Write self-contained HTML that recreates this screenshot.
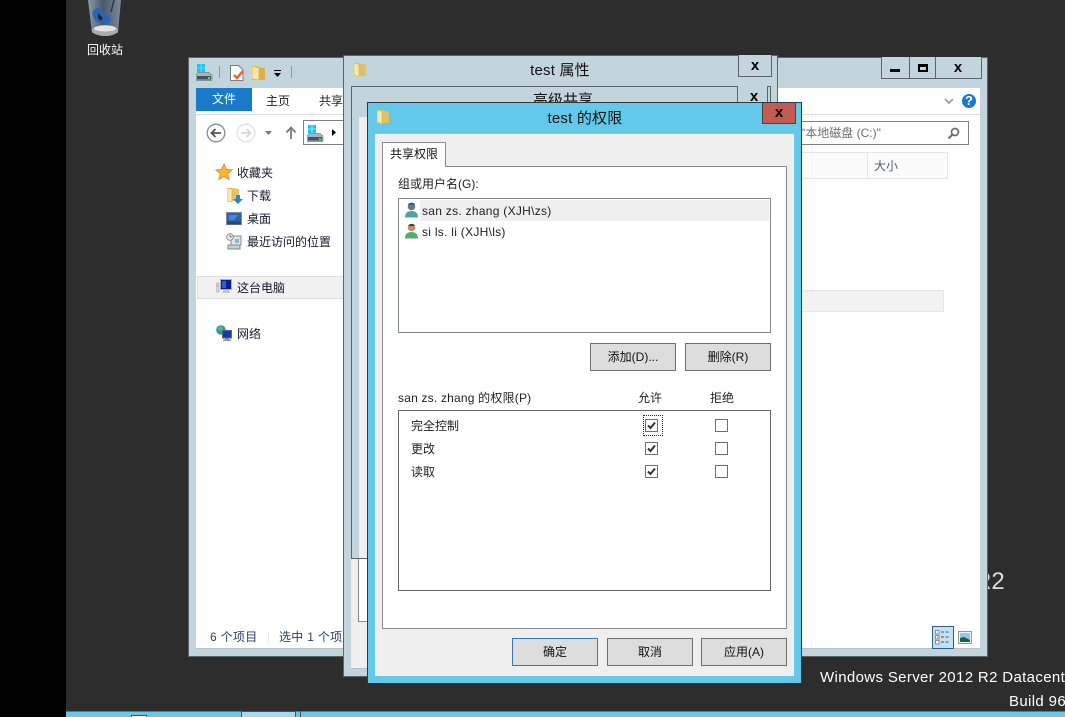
<!DOCTYPE html>
<html lang="zh"><head><meta charset="utf-8"><title>test 的权限</title>
<style>
html,body{margin:0;padding:0;width:1065px;height:717px;overflow:hidden;background:#2d2d2d}
body{position:relative;font:12px/16px "Liberation Sans","Noto Sans CJK SC",sans-serif;color:#000}
.b,.t,svg{position:absolute;box-sizing:border-box}
.t{white-space:nowrap}
.x{background:#c2d5dc;border:1px solid #5f6468}
.btn{position:absolute;box-sizing:border-box;background:#dddddd;border:1px solid #707070;text-align:center;line-height:26px;color:#111}
.xb{font:bold 15px/18px "Liberation Sans",sans-serif;text-align:center}
.ck{position:absolute;box-sizing:border-box;width:13px;height:13px;background:#fff;border:1px solid #707070}
</style></head><body>
<div class="b" style="left:0;top:0;width:66px;height:717px;background:#000"></div>

<!-- recycle bin -->
<svg style="left:85px;top:0" width="40" height="38" viewBox="0 0 40 38">
<defs><linearGradient id="g1" x1="0" x2="1" y1="0" y2="0"><stop offset="0" stop-color="#8a9aa8"/><stop offset=".45" stop-color="#4a5a6b"/><stop offset="1" stop-color="#7a8b9a"/></linearGradient></defs>
<path d="M3 0h33l-3 33H7z" fill="url(#g1)"/>
<path d="M8 11c3-4 7-4 9-1 2 2 2 4 5 5 3 1 5 4 3 7-2 2-5 2-8 1-3-2-5 0-7-3-2-3-3-6-2-9z" fill="#2f62b5"/>
<path d="M13 13l5 5-2 3-3-3z" fill="#1c2a38"/>
<path d="M29 0l-3 12" stroke="#2a3644" stroke-width="1.500"/>
<ellipse cx="20" cy="30.500" rx="13" ry="5.500" fill="#a8acaf"/><ellipse cx="20" cy="28.500" rx="11" ry="3" fill="#e3e4e4"/>
</svg>
<div class="t" style="left:87px;top:42px;color:#fff">回收站</div>

<!-- Desktop watermark -->
<div class="t" style="left:974px;top:568px;color:#dcdcdc;font-size:24px;line-height:28px">R2</div>
<div class="t" style="left:820px;top:669px;color:#fff;font-size:15px;line-height:18px;letter-spacing:.35px">Windows Server 2012 R2 Datacenter</div>
<div class="t" style="left:1009px;top:693px;color:#fff;font-size:15px;line-height:18px;letter-spacing:.35px">Build 9600</div>

<!-- taskbar -->
<div class="b" style="left:66px;top:711px;width:999px;height:6px;background:#63c8ea;border-top:1px solid #4d7f90"></div>
<div class="b" style="left:241px;top:711px;width:55px;height:6px;background:#9edcf2;border:1px solid #3f5a66;border-bottom:0"></div>
<div class="b" style="left:300px;top:711px;width:1px;height:6px;background:#3f5a66"></div>
<div class="b" style="left:131px;top:715px;width:16px;height:2px;background:#fff;border:1px solid #1a5fa8;border-bottom:0"></div>

<!-- explorer -->
<div class="b x" style="left:188px;top:57px;width:800px;height:600px"></div>
<div class="b" style="left:196px;top:88px;width:784px;height:561px;background:#fff;border-bottom:1px solid #b4bfc6"></div>
<div class="b" style="left:196px;top:114px;width:784px;height:1px;background:#dadbdc"></div>
<div class="b" style="left:196px;top:88px;width:56px;height:23px;background:#1979ca"></div>
<div class="t" style="left:212px;top:91px;color:#fff">文件</div>
<div class="t" style="left:266px;top:93px;color:#222">主页</div>
<div class="t" style="left:319px;top:93px;color:#222">共享</div>

<!-- QAT -->
<svg style="left:196px;top:63px" width="17" height="18" viewBox="0 0 17 18"><path d="M1 1h3.700v3.700H1zM5.300 1H9v3.700H5.300zM1 5.300h3.700V9H1zM5.300 5.300H9V9H5.300z" fill="#10c8fb"/><path d="M0 12l2-2.500h11l3 2.500v5.500H0z" fill="#a9b4ba" stroke="#77838b" stroke-width=".7"/><rect x="1" y="13" width="14" height="3.500" fill="#3f5563"/><rect x="12" y="14" width="2" height="2" fill="#5fd15f"/></svg>
<div class="b" style="left:219px;top:66px;width:1px;height:12px;background:#8a9aa1"></div>
<svg style="left:230px;top:65px" width="14" height="16" viewBox="0 0 14 16"><path d="M.5.500h8l4.500 4.500v10.500H.5z" fill="#fbfbfb" stroke="#7f7f7f"/><path d="M4 10l3 3 6-7" fill="none" stroke="#e2683e" stroke-width="2.500"/></svg>
<svg style="left:252px;top:65px" width="14" height="16" viewBox="0 0 14 16"><path d="M0 1h5l8 2v12H0z" fill="#e9c767"/><path d="M0 1l7 2v12l-7-1z" fill="#f8e7a4" stroke="#c9a443" stroke-width=".6"/><path d="M7 3h6v12H7z" fill="#dcb04c"/></svg>
<svg style="left:273px;top:70px" width="9" height="8" viewBox="0 0 9 8"><path d="M1 0h7v1H1z" fill="#000"/><path d="M1 3h7L4.500 7z" fill="#000"/></svg>
<div class="b" style="left:291px;top:66px;width:1px;height:12px;background:#8a9aa1"></div>

<!-- explorer window buttons -->
<div class="b" style="left:881px;top:57px;width:101px;height:22px;background:#c2d5dc;border:1px solid #5f6468;border-top:0"></div>
<div class="b" style="left:909px;top:57px;width:1px;height:22px;background:#5f6468"></div>
<div class="b" style="left:935px;top:57px;width:1px;height:22px;background:#5f6468"></div>
<div class="b" style="left:890px;top:69px;width:10px;height:3px;background:#000"></div>
<div class="b" style="left:918px;top:64px;width:10px;height:8px;border:2px solid #000;border-top-width:3px"></div>
<div class="t xb" style="left:948px;top:59px;width:20px">x</div>

<!-- ribbon right -->
<svg style="left:943px;top:97px" width="12" height="9" viewBox="0 0 12 9"><path d="M2 2l4 4 4-4" fill="none" stroke="#a0a0a0" stroke-width="1.800"/></svg>
<div class="b" style="left:962px;top:94px;width:14px;height:14px;border-radius:50%;background:#1979ca;color:#fff;font:bold 13px/14px 'Liberation Sans',sans-serif;text-align:center">?</div>

<!-- nav -->
<svg style="left:206px;top:123px" width="20" height="20" viewBox="0 0 20 20"><circle cx="10" cy="10" r="8.800" fill="#fff" stroke="#8a8a8a" stroke-width="1.300"/><path d="M15 10H6M9.500 6l-4 4 4 4" fill="none" stroke="#555" stroke-width="1.800"/></svg>
<svg style="left:236px;top:123px" width="20" height="20" viewBox="0 0 20 20"><circle cx="10" cy="10" r="8.800" fill="#fff" stroke="#e2e2e2" stroke-width="1.300"/><path d="M5 10h9M10.500 6l4 4-4 4" fill="none" stroke="#d8d8d8" stroke-width="1.800"/></svg>
<svg style="left:264px;top:130px" width="9" height="6" viewBox="0 0 9 6"><path d="M1 1h7L4.500 5z" fill="#777"/></svg>
<svg style="left:285px;top:126px" width="12" height="14" viewBox="0 0 12 14"><path d="M6 13V2M1.500 6.500L6 1.500l4.500 5" fill="none" stroke="#7a7a7a" stroke-width="1.800"/></svg>
<div class="b" style="left:303px;top:120px;width:60px;height:25px;border:1px solid #808080;background:#fff"></div>
<svg style="left:307px;top:124px" width="17" height="18" viewBox="0 0 17 18"><path d="M1 1h3.700v3.700H1zM5.300 1H9v3.700H5.300zM1 5.300h3.700V9H1zM5.300 5.300H9V9H5.300z" fill="#10c8fb"/><path d="M0 12l2-2.500h11l3 2.500v5.500H0z" fill="#a9b4ba" stroke="#77838b" stroke-width=".7"/><rect x="1" y="13" width="14" height="3.500" fill="#3f5563"/><rect x="12" y="14" width="2" height="2" fill="#5fd15f"/></svg>
<svg style="left:332px;top:128px" width="5" height="9" viewBox="0 0 5 9"><path d="M0 1l4 3.500L0 8z" fill="#000"/></svg>

<!-- search -->
<div class="b" style="left:780px;top:121px;width:189px;height:24px;border:1px solid #808080;border-left:0;background:#fff"></div>
<div class="t" style="left:801px;top:125px;color:#6d6d6d">"本地磁盘 (C:)"</div>
<svg style="left:947px;top:127px" width="13" height="13" viewBox="0 0 13 13"><circle cx="8" cy="5" r="3.500" fill="none" stroke="#6e6e6e" stroke-width="1.700"/><path d="M5.500 7.500L1.500 11.500" stroke="#6e6e6e" stroke-width="2.200"/></svg>

<!-- header -->
<div class="b" style="left:778px;top:152px;width:170px;height:27px;background:#fbfbfb;border:1px solid #e5e5e5;border-left:0"></div>
<div class="b" style="left:867px;top:152px;width:1px;height:27px;background:#e5e5e5"></div>
<div class="t" style="left:874px;top:158px;color:#4c607a">大小</div>
<div class="b" style="left:778px;top:290px;width:166px;height:22px;background:#f2f2f2;border:1px solid #e6e6e6;border-left:0"></div>

<!-- nav pane -->
<svg style="left:215px;top:163px" width="18" height="18" viewBox="0 0 18 18"><path d="M9 1l2.400 5.300 5.800.6-4.300 3.900 1.200 5.700L9 13.600l-5.100 2.900 1.200-5.700L.8 6.900l5.800-.6z" fill="#f7b733" stroke="#e9893a" stroke-width=".9"/></svg>
<div class="t" style="left:237px;top:165px;color:#151a30">收藏夹</div>
<svg style="left:227px;top:187px" width="16" height="17" viewBox="0 0 16 17"><path d="M0 1h5l7 1v12H0z" fill="#e4c369"/><path d="M0 1l5 1v13l-5-1z" fill="#f7e8ae" stroke="#c9a443" stroke-width=".5"/><path d="M9 8h4v4h3l-5 5-5-5h3z" fill="#2a84d3"/></svg>
<div class="t" style="left:247px;top:188px;color:#151a30">下载</div>
<svg style="left:226px;top:212px" width="16" height="14" viewBox="0 0 16 14"><rect x=".5" y=".5" width="15" height="12" fill="#2b62b9" stroke="#7f8c99"/><rect x="1" y="9.500" width="14" height="3" fill="#33475a"/><path d="M3 3h9l-4 5H3z" fill="#4c86d8"/></svg>
<div class="t" style="left:247px;top:211px;color:#151a30">桌面</div>
<svg style="left:226px;top:233px" width="16" height="17" viewBox="0 0 16 17"><rect x="5" y="3" width="10" height="9" fill="#dfe7ea" stroke="#808d92"/><rect x="9" y="6" width="4" height="4" fill="#8fb7cc"/><circle cx="4" cy="4" r="3.300" fill="#f3f3f3" stroke="#8a8a8a"/><path d="M4 2v2h2" fill="none" stroke="#555" stroke-width=".8"/><rect x="2" y="12" width="12" height="4" fill="#c9cfd2" stroke="#808d92"/></svg>
<div class="t" style="left:247px;top:234px;color:#151a30">最近访问的位置</div>
<div class="b" style="left:197px;top:276px;width:146px;height:23px;background:#f1f1f1;border:1px solid #dedede;border-right:0"></div>
<svg style="left:216px;top:279px" width="16" height="15" viewBox="0 0 16 15"><rect x="0" y="4" width="3" height="9" fill="#d8dcde" stroke="#8d9599" stroke-width=".5"/><rect x="1" y="6" width="1" height="2" fill="#5fd15f"/><rect x="4.500" y=".5" width="11" height="10" fill="#0c1f8c" stroke="#a9b1b5"/><path d="M6 2h4v7H6z" fill="#2f5fd0"/><path d="M7 11h6l1 3H6z" fill="#c3c8ca"/></svg>
<div class="t" style="left:237px;top:280px;color:#151a30">这台电脑</div>
<svg style="left:216px;top:325px" width="17" height="17" viewBox="0 0 17 17"><circle cx="5" cy="5" r="4.800" fill="#2a8fd3"/><path d="M2 3l3-2 2 2-2 3-3-1z" fill="#5cc04f"/><rect x="6.500" y="5.500" width="9" height="7.500" fill="#123bb0" stroke="#5d6c75"/><path d="M9 13.500h4v1h2v1.500H7V14.500h2z" fill="#8a969c"/></svg>
<div class="t" style="left:237px;top:326px;color:#151a30">网络</div>

<!-- status -->
<div class="t" style="left:210px;top:629px;color:#2c3f63;letter-spacing:.3px">6 个项目</div>
<div class="b" style="left:268px;top:631px;width:1px;height:12px;background:#e5e5e5"></div>
<div class="t" style="left:279px;top:629px;color:#2c3f63;letter-spacing:.3px">选中 1 个项目</div>
<div class="b" style="left:932px;top:626px;width:22px;height:23px;background:#c3e0f5;border:1px solid #2c628f"></div>
<svg style="left:935px;top:630px" width="16" height="16" viewBox="0 0 16 16"><g fill="#fff" stroke="#777" stroke-width=".8"><rect x=".5" y=".5" width="3.500" height="3.500"/><rect x=".5" y="5.500" width="3.500" height="3.500"/><rect x=".5" y="10.500" width="3.500" height="3.500"/></g><path d="M2 6.800h1v1H2z" fill="#d22"/><path d="M6 2h3M10.500 2h3M6 7h3M10.500 7h3M6 12h3M10.500 12h3" stroke="#555" stroke-width="1"/></svg>
<svg style="left:958px;top:631px" width="14" height="13" viewBox="0 0 14 13"><rect x=".5" y=".5" width="13" height="12" fill="#f2f5f7" stroke="#8d989e"/><rect x="2" y="2" width="10" height="9" fill="#9cc7e4"/><path d="M2 7l4-1 6 3v2H2z" fill="#1f5e4a"/></svg>

<!-- Properties window -->
<div class="b x" style="left:343px;top:55px;width:435px;height:622px"></div>
<svg style="left:354px;top:62px" width="13" height="16" viewBox="0 0 13 16"><path d="M0 1h5l7 2v11H0z" fill="#e2c163"/><path d="M0 1l5 1.500V15L0 13z" fill="#f6e8a8" stroke="#d2ae52" stroke-width=".5"/></svg>
<div class="t" style="left:460px;top:62px;width:200px;text-align:center;font-size:15px;line-height:18px;color:#111;letter-spacing:.2px">test 属性</div>
<div class="b" style="left:738px;top:55px;width:34px;height:22px;background:#c2d5dc;border:1px solid #5f6468;border-top:0"></div>
<div class="t xb" style="left:745px;top:57px;width:20px">x</div>
<div class="b" style="left:351px;top:558px;width:426px;height:111px;background:#efefef;border-bottom:1px solid #b4bfc6"></div>
<div class="b" style="left:358px;top:558px;width:20px;height:64px;background:#fff;border:1px solid #8a8a8a;border-top:0"></div>

<!-- Advanced sharing window -->
<div class="b x" style="left:351px;top:86px;width:420px;height:473px"></div>
<div class="t" style="left:463px;top:92px;width:200px;text-align:center;font-size:15px;line-height:18px;color:#111">高级共享</div>
<div class="b" style="left:737px;top:86px;width:31px;height:21px;background:#c2d5dc;border:1px solid #5f6468;border-top:0"></div>
<div class="t xb" style="left:744px;top:88px;width:20px">x</div>
<div class="b" style="left:359px;top:117px;width:20px;height:441px;background:#efefef"></div>

<!-- Permissions dialog -->
<div class="b" style="left:367px;top:102px;width:435px;height:581px;background:#63c8ea;border:1px solid #2f3a40;border-bottom:0;border-right-width:1px"></div>
<div class="b" style="left:375px;top:133px;width:419px;height:543px;background:#efefef;border-top:1px solid #9bc1d2"></div>
<svg style="left:377px;top:109px" width="13" height="16" viewBox="0 0 13 16"><path d="M0 1h5l7 2v11H0z" fill="#e2c163"/><path d="M0 1l5 1.500V15L0 13z" fill="#f6e8a8" stroke="#d2ae52" stroke-width=".5"/></svg>
<div class="t" style="left:485px;top:110px;width:200px;text-align:center;font-size:15px;line-height:18px;color:#111;letter-spacing:.2px">test 的权限</div>
<div class="b" style="left:762px;top:103px;width:34px;height:21px;background:#c25b52;border:1px solid #444;border-top:0"></div>
<div class="t xb" style="left:769px;top:104px;width:20px">x</div>

<!-- Panel + tab -->
<div class="b" style="left:382px;top:166px;width:405px;height:463px;background:#fff;border:1px solid #8a8a90"></div>
<div class="b" style="left:382px;top:142px;width:64px;height:25px;background:#fff;border:1px solid #8a8a90;border-bottom:0"></div>
<div class="t" style="left:390px;top:146px;color:#111">共享权限</div>
<div class="t" style="left:398px;top:176px;color:#222">组或用户名(G):</div>

<div class="b" style="left:398px;top:198px;width:373px;height:135px;background:#fff;border:1px solid #828790"></div>
<div class="b" style="left:420px;top:200px;width:349px;height:21px;background:#efefef"></div>
<svg style="left:405px;top:202px" width="13" height="16" viewBox="0 0 13 16"><circle cx="6.500" cy="4.500" r="3.800" fill="#66798a"/><path d="M3 2.500c2-2.500 6-2 7 0z" fill="#344654"/><path d="M0 15.500c0-5 3-6.500 6.500-6.500s6.500 1.500 6.500 6.500z" fill="#4ea5a0"/></svg>
<div class="t" style="left:422px;top:203px;color:#222;letter-spacing:.28px">san zs. zhang (XJH\zs)</div>
<svg style="left:405px;top:223px" width="13" height="16" viewBox="0 0 13 16"><circle cx="6.500" cy="4.500" r="3.800" fill="#c58f6b"/><path d="M3 3c2-3 6-2.500 7 0z" fill="#4c3a2c"/><path d="M0 15.500c0-5 3-6.500 6.500-6.500s6.500 1.500 6.500 6.500z" fill="#4fae78"/></svg>
<div class="t" style="left:422px;top:224px;color:#222;letter-spacing:.28px">si ls. li (XJH\ls)</div>

<div class="btn" style="left:590px;top:343px;width:86px;height:28px">添加(D)...</div>
<div class="btn" style="left:685px;top:343px;width:86px;height:28px">删除(R)</div>

<div class="t" style="left:398px;top:390px;color:#222;letter-spacing:.2px">san zs. zhang 的权限(P)</div>
<div class="t" style="left:638px;top:390px;color:#222">允许</div>
<div class="t" style="left:710px;top:390px;color:#222">拒绝</div>

<div class="b" style="left:398px;top:410px;width:373px;height:181px;background:#fff;border:1px solid #666"></div>
<div class="t" style="left:411px;top:418px;color:#222">完全控制</div>
<div class="t" style="left:411px;top:441px;color:#222">更改</div>
<div class="t" style="left:411px;top:464px;color:#222">读取</div>

<div class="b" style="left:643px;top:415px;width:20px;height:21px;border:1px dotted #222"></div>
<div class="ck" style="left:645px;top:419px"></div><div class="ck" style="left:645px;top:442px"></div><div class="ck" style="left:645px;top:465px"></div>
<svg style="left:645px;top:419px" width="13" height="13" viewBox="0 0 13 13"><path d="M3 6.500l2.500 2.500L10 3.500" fill="none" stroke="#333" stroke-width="2"/></svg>
<svg style="left:645px;top:442px" width="13" height="13" viewBox="0 0 13 13"><path d="M3 6.500l2.500 2.500L10 3.500" fill="none" stroke="#333" stroke-width="2"/></svg>
<svg style="left:645px;top:465px" width="13" height="13" viewBox="0 0 13 13"><path d="M3 6.500l2.500 2.500L10 3.500" fill="none" stroke="#333" stroke-width="2"/></svg>
<div class="ck" style="left:715px;top:419px"></div><div class="ck" style="left:715px;top:442px"></div><div class="ck" style="left:715px;top:465px"></div>

<div class="btn" style="left:512px;top:638px;width:86px;height:28px;border-color:#3a7ab0">确定</div>
<div class="btn" style="left:607px;top:638px;width:86px;height:28px">取消</div>
<div class="btn" style="left:701px;top:638px;width:86px;height:28px">应用(A)</div>
</body></html>
